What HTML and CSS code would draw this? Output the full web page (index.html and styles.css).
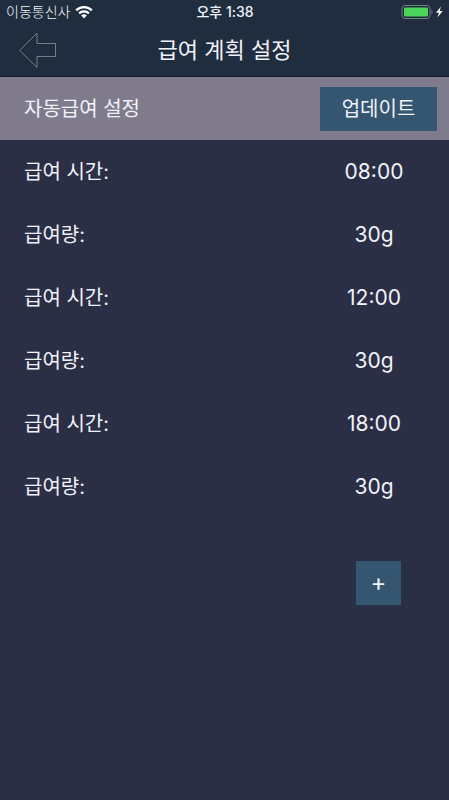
FILE: index.html
```html
<!DOCTYPE html>
<html lang="ko">
<head>
    <meta charset="UTF-8" />
    <meta name="viewport" content="width=device-width, initial-scale=1" />
    <title>급여 계획 설정</title>
    <link rel="stylesheet" href="styles.css">
</head>
<body>

<header class="header">
    <div class="status-bar">
        <div class="carrier">
            <span>이동통신사</span>
            <svg class="wifi" width="18" height="14" viewBox="0 0 18 14" fill="none" stroke="#fff" stroke-width="2.4">
                <path d="M1.2 5.4a11 11 0 0 1 15.6 0" />
                <path d="M4.1 8.4a6.9 6.9 0 0 1 9.8 0" />
                <path d="M9 13.4 6.2 10.6a4 4 0 0 1 5.6 0z" fill="#fff" stroke="none" />
            </svg>
        </div>
        <span class="clock">오후 1:38</span>
        <div class="battery">
            <svg width="43" height="16" viewBox="0 0 43 16">
                <rect x="1" y="1.5" width="28" height="13" rx="3" fill="none" stroke="#6f8085" />
                <rect x="3" y="3.5" width="24" height="9" rx="1" fill="#4cd659" />
                <path d="M30.5 5.5q2 2.5 0 5z" fill="#7b8993" />
                <path d="M40 2.5 35 8.8h3l-1.6 4.8 5.3-6.7h-3.1z" fill="#fff" />
            </svg>
        </div>
    </div>
    <div class="nav-bar">
        <button class="back-button" type="button" aria-label="뒤로">
            <svg width="38" height="38" viewBox="0 0 38 38" fill="none" stroke="#71808d">
                <path d="M.7 19.5 18 2v10.500h18.500v13H18v11z" />
            </svg>
        </button>
        <h1 class="title">급여 계획 설정</h1>
    </div>
</header>

<main>
    <div class="row section">
        <h2 class="row-label">자동급여 설정</h2>
        <div class="row-action">
            <button class="button update-button" type="button">업데이트</button>
        </div>
    </div>

    <dl class="plan">
        <div class="row">
            <dt class="row-label">급여 시간:</dt>
            <dd class="row-value">08:00</dd>
        </div>
        <div class="row">
            <dt class="row-label">급여량:</dt>
            <dd class="row-value">30g</dd>
        </div>
        <div class="row">
            <dt class="row-label">급여 시간:</dt>
            <dd class="row-value">12:00</dd>
        </div>
        <div class="row">
            <dt class="row-label">급여량:</dt>
            <dd class="row-value">30g</dd>
        </div>
        <div class="row">
            <dt class="row-label">급여 시간:</dt>
            <dd class="row-value">18:00</dd>
        </div>
        <div class="row">
            <dt class="row-label">급여량:</dt>
            <dd class="row-value">30g</dd>
        </div>
    </dl>

    <div class="row add-row">
        <div class="row-action">
            <button class="button add-button" type="button" aria-label="추가">+</button>
        </div>
    </div>
</main>

</body>
</html>
```
FILE: styles.css
```css
* {
    box-sizing: border-box;
    margin: 0;
    padding: 0;
}
body {
    min-height: 100vh;
    background: #2b2f45;
    color: #f0f2fa;
    font-family: Inter, 'Noto Sans CJK KR', sans-serif;
    font-size: 20px;
    line-height: 28px;
}
button {
    border: none;
    color: inherit;
    font: inherit;
    cursor: pointer;
}
svg {
    display: block;
}

/* Header */
.header {
    background: #1f2d3f;
    border-bottom: 1px solid #17202f;
}
.status-bar {
    display: grid;
    grid-template-columns: 1fr auto 1fr;
    align-items: center;
    height: 24px;
    padding: 0 5px 0 6px;
    font-size: 14px;
    line-height: 24px;
}
.carrier {
    display: flex;
    align-items: center;
    gap: 5px;
    font-weight: 300;
}
.clock {
    font-weight: 500;
}
.battery {
    justify-self: end;
}
.nav-bar {
    display: grid;
    grid-template-columns: 1fr auto 1fr;
    align-items: center;
    height: 52px;
    padding: 0 19px;
}
.back-button {
    justify-self: start;
    background: none;
}
.title {
    font-size: 22px;
    font-weight: 400;
}

/* Rows */
.row {
    display: flex;
    align-items: center;
    justify-content: space-between;
    height: 63px;
    padding-left: 24px;
}
.section {
    background: #807b8c;
}
.row-label {
    font-size: 20px;
    font-weight: 400;
}
.row-value {
    width: 150px;
    font-size: 21px;
    text-align: center;
}
.row-action {
    display: flex;
    justify-content: center;
    width: 129px;
    padding-right: 12px;
}
.button {
    height: 44px;
    background: #345670;
}
.update-button {
    width: 100%;
}
.add-row {
    justify-content: flex-end;
    margin-top: 33px;
}
.add-button {
    width: 45px;
    font-size: 24px;
}
```
